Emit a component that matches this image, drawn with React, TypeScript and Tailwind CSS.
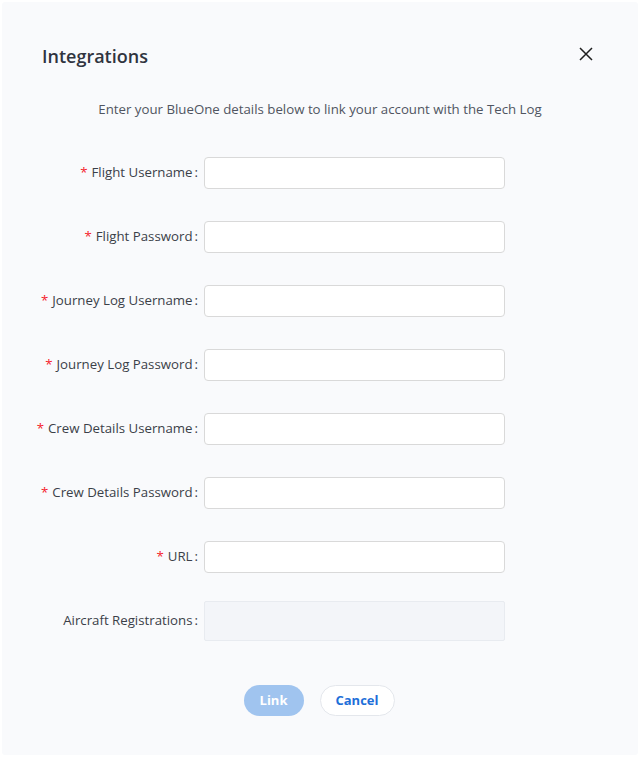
const fields = [
  { label: 'Flight Username', required: true },
  { label: 'Flight Password', required: true },
  { label: 'Journey Log Username', required: true },
  { label: 'Journey Log Password', required: true },
  { label: 'Crew Details Username', required: true },
  { label: 'Crew Details Password', required: true },
  { label: 'URL', required: true },
];

export default function App() {
  return (
    <div className="h-[757px] w-[640px] bg-white p-[2px] font-['Open_Sans','Noto_Sans',sans-serif]">
      <div className="relative h-[753px] w-[636px] rounded-[3px] bg-[#f9fafc]">
        <div className="flex items-center justify-between pl-10 pr-[45px] pt-[41px]">
          <h2 className="text-[18px] leading-[26px] font-semibold text-[#30343f]">Integrations</h2>
          <button type="button" className="relative -top-[2px] text-[#1f1f1f]">
            <svg width="14" height="14" viewBox="0 0 14 14" fill="none" stroke="currentColor" strokeWidth="1.5">
              <path d="M1 1l12 12M13 1L1 13" />
            </svg>
          </button>
        </div>

        <p className="mt-[30px] text-center text-[13.25px] leading-5 text-[#505561]">
          Enter your BlueOne details below to link your account with the Tech Log
        </p>

        <form className="mt-[38px] flex flex-col gap-[32px]">
          {fields.map((f) => (
            <div key={f.label} className="flex items-center">
              <label className="w-[202px] pr-[6px] text-right text-[13.25px] text-[#3b3f48]">
                {f.required && <span className="mr-1 text-[#f5222d]">*</span>}
                {f.label}
                <span className="ml-[2px]">:</span>
              </label>
              <input
                type="text"
                className="h-[32px] w-[301px] rounded-[4px] border border-[#d9d9d9] bg-white px-3 text-[13px] outline-none"
              />
            </div>
          ))}
          <div className="-mt-[4px] flex items-center">
            <label className="w-[202px] pr-[6px] text-right text-[13.25px] text-[#3b3f48]">
              Aircraft Registrations<span className="ml-[2px]">:</span>
            </label>
            <div className="h-[40px] w-[301px] rounded-[2px] border border-[#e8ebf0] bg-[#f3f5f9]" />
          </div>
        </form>

        <div className="mt-[44px] flex justify-center gap-4 pr-[2px]">
          <button
            type="button"
            disabled
            className="h-[31px] w-[60px] rounded-full bg-[#a0c4ef] text-[13px] font-bold text-white"
          >
            Link
          </button>
          <button
            type="button"
            className="h-[31px] w-[75px] rounded-full border border-[#e4e7ec] bg-white text-[13px] font-bold text-[#1e6fd9]"
          >
            Cancel
          </button>
        </div>
      </div>
    </div>
  );
}
